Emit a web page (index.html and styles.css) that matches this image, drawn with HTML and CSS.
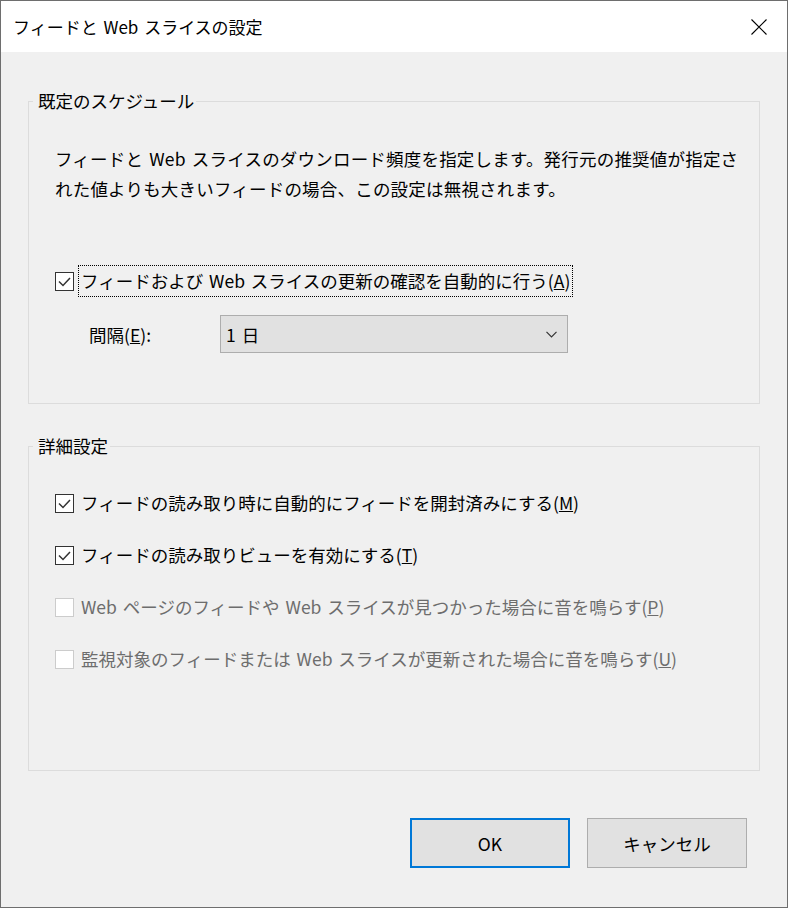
FILE: index.html
```html
<!DOCTYPE html>
<html lang="ja">
<head>
<meta charset="utf-8">
<title>フィードと Web スライスの設定</title>
<link rel="stylesheet" href="styles.css">
</head>
<body>
<div class="window">
  <div class="titlebar">
    <span class="title">フィードと Web スライスの設定</span>
    <svg class="close" width="16" height="16" viewBox="0 0 16 16"><path d="M0.5 0.5 L15.5 15.5 M15.5 0.5 L0.5 15.5" stroke="#000" stroke-width="1.1" fill="none"/></svg>
  </div>
  <div class="dialog-body">
    <fieldset class="group">
      <legend class="group-title">既定のスケジュール</legend>
      <div class="group-content schedule">
        <p class="desc">フィードと Web スライスのダウンロード頻度を指定します。発行元の推奨値が指定さ<br>れた値よりも大きいフィードの場合、この設定は無視されます。</p>
        <div class="check-row first">
          <svg class="box" width="19" height="19" viewBox="0 0 19 19"><rect x="0.5" y="0.5" width="18" height="18" fill="#fff" stroke="#333"/><path d="M4 9.5 L8 13.5 L15 6" stroke="#333" stroke-width="1.5" fill="none"/></svg>
          <span class="label focused">フィードおよび Web スライスの更新の確認を自動的に行う(<u>A</u>)</span>
        </div>
        <div class="interval">
          <span class="interval-label">間隔(<u>E</u>):</span>
          <div class="combo">
            <span class="combo-value">1 日</span>
            <svg class="chevron" width="11" height="7" viewBox="0 0 11 7"><path d="M0.5 0.8 L5.5 5.8 L10.5 0.8" stroke="#333" stroke-width="1.2" fill="none"/></svg>
          </div>
        </div>
      </div>
    </fieldset>

    <fieldset class="group advanced">
      <legend class="group-title">詳細設定</legend>
      <div class="group-content options">
        <div class="check-row">
          <svg class="box" width="19" height="19" viewBox="0 0 19 19"><rect x="0.5" y="0.5" width="18" height="18" fill="#fff" stroke="#333"/><path d="M4 9.5 L8 13.5 L15 6" stroke="#333" stroke-width="1.5" fill="none"/></svg>
          <span class="label">フィードの読み取り時に自動的にフィードを開封済みにする(<u>M</u>)</span>
        </div>
        <div class="check-row">
          <svg class="box" width="19" height="19" viewBox="0 0 19 19"><rect x="0.5" y="0.5" width="18" height="18" fill="#fff" stroke="#333"/><path d="M4 9.5 L8 13.5 L15 6" stroke="#333" stroke-width="1.5" fill="none"/></svg>
          <span class="label">フィードの読み取りビューを有効にする(<u>T</u>)</span>
        </div>
        <div class="check-row disabled">
          <svg class="box" width="19" height="19" viewBox="0 0 19 19"><rect x="0.5" y="0.5" width="18" height="18" fill="#fff" stroke="#ccc"/></svg>
          <span class="label">Web ページのフィードや Web スライスが見つかった場合に音を鳴らす(<u>P</u>)</span>
        </div>
        <div class="check-row disabled">
          <svg class="box" width="19" height="19" viewBox="0 0 19 19"><rect x="0.5" y="0.5" width="18" height="18" fill="#fff" stroke="#ccc"/></svg>
          <span class="label">監視対象のフィードまたは Web スライスが更新された場合に音を鳴らす(<u>U</u>)</span>
        </div>
      </div>
    </fieldset>

    <div class="buttons">
      <button class="btn default">OK</button>
      <button class="btn">キャンセル</button>
    </div>
  </div>
</div>
</body>
</html>
```

FILE: styles.css
```css
html, body {
  margin: 0;
  padding: 0;
}

body {
  font-family: "Noto Sans CJK JP", "Noto Sans", sans-serif;
  font-size: 17.5px;
  color: #000;
  background: #f0f0f0;
  word-spacing: 2px;
}

.window {
  width: 788px;
  height: 908px;
  box-sizing: border-box;
  border: 1px solid #6e6e6e;
  background: #f0f0f0;
  display: flex;
  flex-direction: column;
}

.titlebar {
  height: 51px;
  flex: none;
  background: #fff;
  display: flex;
  align-items: center;
  padding-left: 12px;
  padding-right: 20px;
}

.title {
  flex: 1;
  font-size: 17px;
  line-height: 20px;
}

.close {
  display: block;
}

.dialog-body {
  flex: 1;
  display: flex;
  flex-direction: column;
}

.group {
  margin: 39px 27px 0;
  padding: 0;
  border: 1px solid #dcdcdc;
  min-width: 0;
}

.group.advanced {
  margin-top: 32px;
}

.group-title {
  margin-left: 4px;
  padding: 0 2px 0 5px;
  font-size: 17.5px;
  line-height: 20px;
}

.group-content {
  padding-left: 26px;
}

.schedule {
  padding-bottom: 50px;
}

.desc {
  margin: 33px 0 0;
  line-height: 30px;
  letter-spacing: 0.2px;
}

.check-row {
  display: flex;
  align-items: center;
  height: 32px;
}

.check-row.first {
  margin-top: 61px;
}

.box {
  display: block;
  flex: none;
}

.label {
  margin-left: 4px;
  padding: 0 2px;
  line-height: 30px;
  border: 1px solid transparent;
  white-space: nowrap;
}

.label.focused {
  border: 1px dotted #000;
}

.check-row.disabled .label {
  color: #6d6d6d;
}

.interval {
  margin-top: 18px;
  display: flex;
  align-items: center;
  padding-left: 34px;
}

.interval-label {
  width: 131px;
  flex: none;
}

.combo {
  width: 348px;
  height: 38px;
  box-sizing: border-box;
  border: 1px solid #adadad;
  background: #e1e1e1;
  display: flex;
  align-items: center;
  justify-content: space-between;
  padding: 0 10px 0 5px;
}

.chevron {
  display: block;
}

.options {
  padding-top: 31px;
  padding-bottom: 95px;
  display: flex;
  flex-direction: column;
  gap: 20px;
}

.buttons {
  margin-top: 47px;
  display: flex;
  justify-content: flex-end;
  gap: 17px;
  padding-right: 40px;
}

.btn {
  width: 160px;
  height: 50px;
  box-sizing: border-box;
  border: 1px solid #adadad;
  background: #e1e1e1;
  font-family: inherit;
  font-size: 17.5px;
  color: #000;
  padding: 0;
}

.btn.default {
  border: 2px solid #0078d7;
}
```
